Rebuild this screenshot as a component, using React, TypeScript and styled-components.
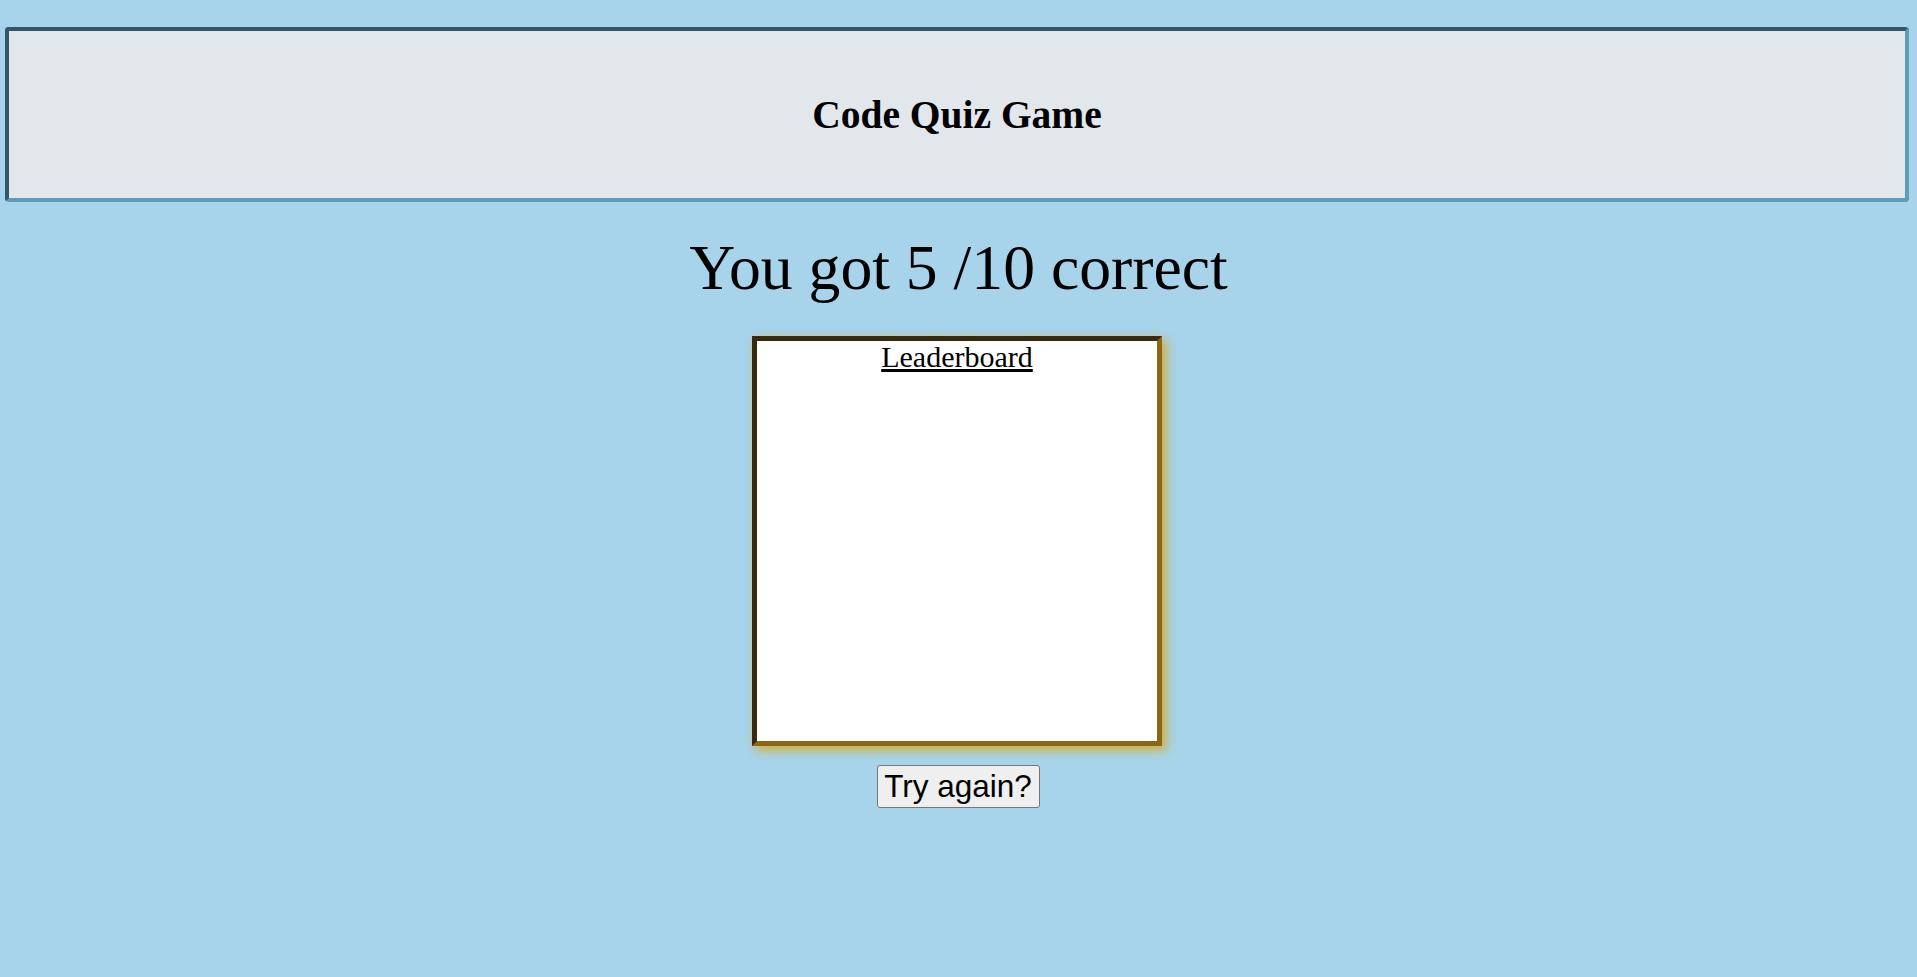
import React from "react";
import styled, { createGlobalStyle } from "styled-components";

const GlobalStyle = createGlobalStyle`
  html, body {
    margin: 0;
    padding: 0;
    background: #a7d4eb;
    font-family: "Liberation Serif", "Times New Roman", serif;
    color: #000;
  }
`;

const Page = styled.div`
  display: flex;
  flex-direction: column;
  align-items: center;
  min-height: 977px;
  padding-top: 27px;
  box-sizing: border-box;
`;

const Header = styled.header`
  align-self: stretch;
  margin: 0 8px 0 5px;
  height: 175px;
  box-sizing: border-box;
  display: flex;
  align-items: center;
  justify-content: center;
  background: #e1e7eb;
  border: 4px solid;
  border-color: #34566a #5e9db8 #5e9db8 #34566a;
  border-radius: 4px;
`;

const Title = styled.h1`
  margin: 0;
  font-size: 39.5px;
  font-weight: bold;
`;

const Score = styled.h2`
  margin: 29px 0 0;
  font-size: 63.7px;
  font-weight: normal;
  line-height: normal;
`;

const Board = styled.section`
  margin: 31px 3px 0 0;
  width: 410px;
  height: 410px;
  box-sizing: border-box;
  background: #fff;
  border: 5px solid;
  border-color: #3b2a0a #8d6614 #8d6614 #3b2a0a;
  box-shadow: 4px 4px 10px rgba(214, 170, 40, 0.95);
  display: flex;
  flex-direction: column;
  align-items: center;
`;

const BoardTitle = styled.h3`
  margin: -1px 0 0;
  font-size: 30px;
  font-weight: normal;
  text-decoration: underline;
  line-height: normal;
`;

const RetryButton = styled.button`
  margin: 19px 1px 0 0;
  width: 163px;
  height: 43px;
  padding: 0;
  font-family: "Liberation Sans", Arial, sans-serif;
  font-size: 31.5px;
  color: #000;
  background: #efefef;
  border: 1px solid #767676;
  border-radius: 3px;
  cursor: pointer;
`;

export default function App() {
  return (
    <>
      <GlobalStyle />
      <Page>
        <Header>
          <Title>Code Quiz Game</Title>
        </Header>
        <Score>You got 5 /10 correct</Score>
        <Board>
          <BoardTitle>Leaderboard</BoardTitle>
        </Board>
        <RetryButton>Try again?</RetryButton>
      </Page>
    </>
  );
}
